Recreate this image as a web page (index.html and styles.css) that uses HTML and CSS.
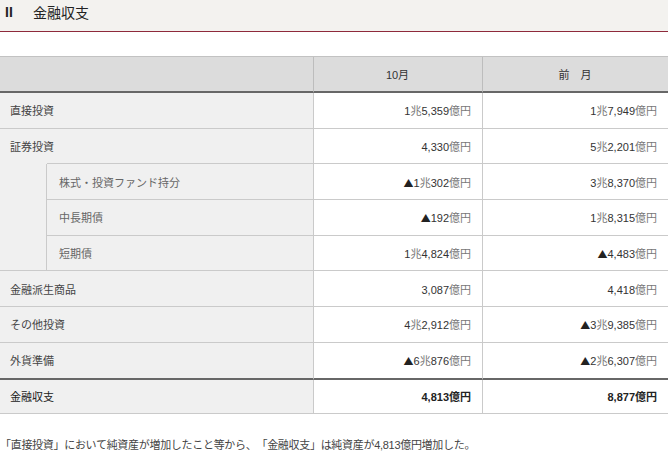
FILE: index.html
```html
<!DOCTYPE html>
<html lang="ja">
<head>
<meta charset="utf-8">
<link rel="stylesheet" href="styles.css">
</head>
<body>
<div class="title"><span class="num">II</span><span class="name">金融収支</span></div>
<table class="bop">
  <colgroup><col class="c1"><col class="c2"><col class="c3"><col class="c4"></colgroup>
  <thead>
    <tr><th colspan="2" class="blank"></th><th>10月</th><th class="last">前　月</th></tr>
  </thead>
  <tbody>
    <tr><th colspan="2">直接投資</th><td>1<span class="u">兆</span>5,359<span class="u">億円</span></td><td class="last">1<span class="u">兆</span>7,949<span class="u">億円</span></td></tr>
    <tr><th colspan="2" class="parent">証券投資</th><td>4,330<span class="u">億円</span></td><td class="last">5<span class="u">兆</span>2,201<span class="u">億円</span></td></tr>
    <tr><th rowspan="3" class="indent"></th><th class="sub">株式・投資ファンド持分</th><td><span class="tri">▲</span>1<span class="u">兆</span>302<span class="u">億円</span></td><td class="last">3<span class="u">兆</span>8,370<span class="u">億円</span></td></tr>
    <tr><th class="sub">中長期債</th><td><span class="tri">▲</span>192<span class="u">億円</span></td><td class="last">1<span class="u">兆</span>8,315<span class="u">億円</span></td></tr>
    <tr><th class="sub">短期債</th><td>1<span class="u">兆</span>4,824<span class="u">億円</span></td><td class="last"><span class="tri">▲</span>4,483<span class="u">億円</span></td></tr>
    <tr><th colspan="2">金融派生商品</th><td>3,087<span class="u">億円</span></td><td class="last">4,418<span class="u">億円</span></td></tr>
    <tr><th colspan="2">その他投資</th><td>4<span class="u">兆</span>2,912<span class="u">億円</span></td><td class="last"><span class="tri">▲</span>3<span class="u">兆</span>9,385<span class="u">億円</span></td></tr>
    <tr class="before-total"><th colspan="2">外貨準備</th><td><span class="tri">▲</span>6<span class="u">兆</span>876<span class="u">億円</span></td><td class="last"><span class="tri">▲</span>2<span class="u">兆</span>6,307<span class="u">億円</span></td></tr>
    <tr class="total"><th colspan="2">金融収支</th><td>4,813<span class="ub">億円</span></td><td class="last">8,877<span class="ub">億円</span></td></tr>
  </tbody>
</table>
<p class="note">「直接投資」において純資産が増加したこと等から、「金融収支」は純資産が4,813億円増加した。</p>
</body>
</html>
```

FILE: styles.css
```css
html, body {
  margin: 0;
  padding: 0;
  background: #ffffff;
  overflow: hidden;
}
body {
  font-family: "Liberation Sans", Arial, "Noto Sans CJK JP", sans-serif;
  color: #333333;
}
.title {
  height: 31px;
  background: #f3f2ef;
  border-bottom: 1px solid #8e2a3b;
  display: flex;
  align-items: flex-start;
  font-size: 14px;
  line-height: 25px;
  color: #222222;
}
.title .num {
  font-weight: bold;
  padding-left: 5px;
  width: 28px;
}
.title .name {
  font-family: "Noto Sans CJK JP", sans-serif;
}
.bop {
  margin-top: 24px;
  width: 668px;
  table-layout: fixed;
  border-collapse: separate;
  border-spacing: 0;
  border-top: 1px solid #c2c2c2;
  font-size: 11px;
}
.c1 { width: 47px; }
.c2 { width: 267px; }
.c3 { width: 169px; }
.c4 { width: 185px; }
.bop th, .bop td {
  box-sizing: content-box;
  height: 34.7px;
  padding: 0 11px 0 10px;
  vertical-align: middle;
  border-bottom: 1px solid #cacaca;
  border-right: 1px solid #cacaca;
  white-space: nowrap;
}
.bop .last { border-right: none; }
.bop thead th {
  background: #dcdcdc;
  font-weight: normal;
  color: #333333;
  text-align: center;
  height: 34px;
  border-bottom: 2px solid #676767;
  border-right-color: #bdbdbd;
}
.bop thead th.last { border-right: none; }
.bop tbody th {
  background: #f0f0f0;
  font-weight: normal;
  text-align: left;
  color: #444444;
  font-family: "Noto Sans CJK JP", sans-serif;
}
.bop tbody th.parent {
  border-bottom: 1px solid transparent;
  background:
    linear-gradient(#cacaca, #cacaca) no-repeat right bottom / calc(100% - 47px) 1px border-box,
    #f0f0f0;
}
.bop tbody th.indent {
  padding: 0;
}
.bop tbody th.sub {
  padding-left: 12px;
  color: #666666;
}
.bop td {
  text-align: right;
  background: #ffffff;
  color: #333333;
}
.u {
  font-family: "Noto Sans CJK JP", sans-serif;
  color: #777777;
}
.ub {
  font-family: "Noto Sans CJK JP", sans-serif;
}
.tri {
  font-family: "Noto Sans CJK JP", sans-serif;
  font-size: 10px;
  color: #222222;
}
.bop tr.before-total th, .bop tr.before-total td {
  border-bottom: 2px solid #676767;
}
.bop tr.total th {
  color: #222222;
  height: 33.7px;
}
.bop tr.total td {
  font-weight: bold;
  color: #222222;
  height: 33.7px;
}
.note {
  margin: 23px 0 0 0;
  font-size: 11px;
  line-height: 16px;
  color: #444444;
  letter-spacing: -0.3px;
  font-family: "Liberation Sans", Arial, "Noto Sans CJK JP", sans-serif;
  text-spacing-trim: space-all;
}
```
